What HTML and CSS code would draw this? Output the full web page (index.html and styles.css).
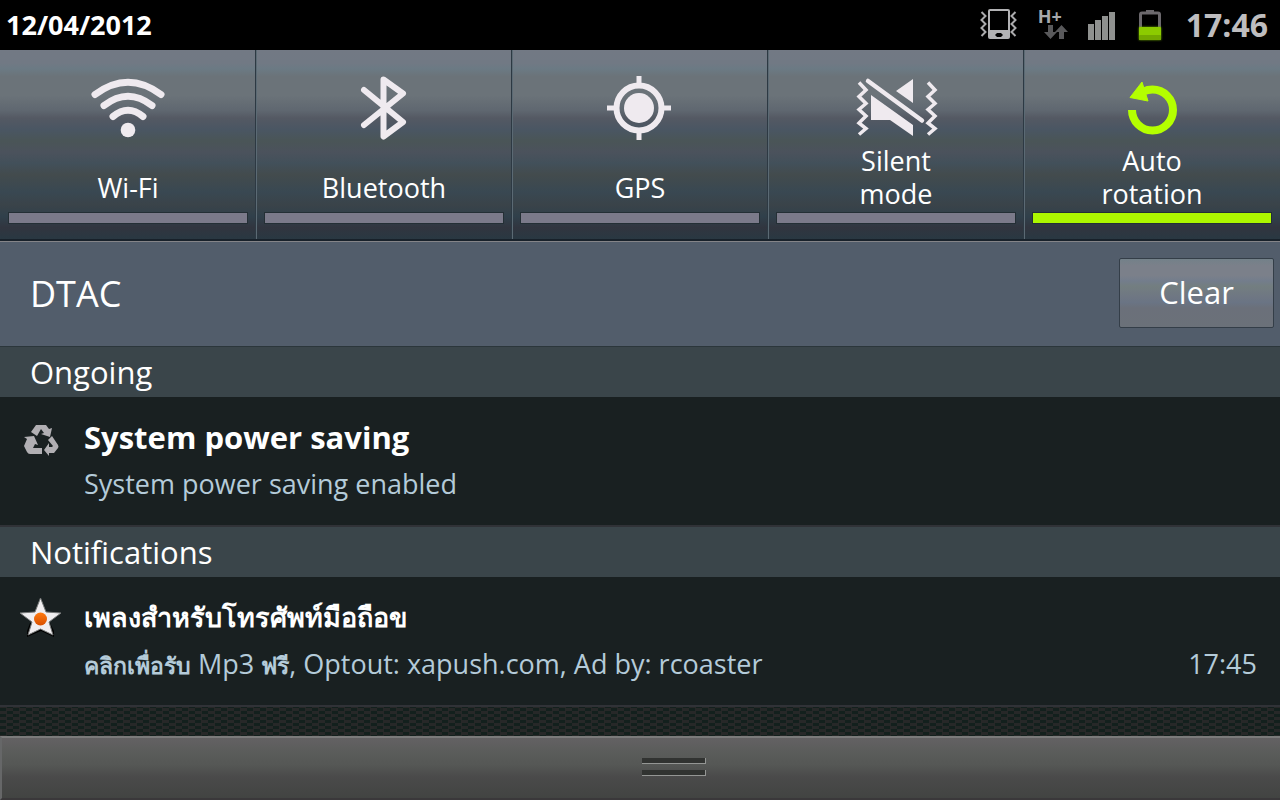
FILE: index.html
```html
<!DOCTYPE html>
<html lang="en">
<head>
    <meta charset="UTF-8">
    <meta name="viewport" content="width=device-width, initial-scale=1.0">
    <title>Notifications</title>
    <link rel="stylesheet" href="styles.css">
</head>
<body>
    <header class="status-bar">
        <span class="date">12/04/2012</span>
        <div class="status-icons">
            <svg class="icon-vibrate" width="38" height="32" viewBox="0 0 38 32">
                <path d="M2 4l4 4-4 4 4 4-4 4 4 4-4 4M36 4l-4 4 4 4-4 4 4 4-4 4 4 4" transform="translate(-.5 0)" fill="none" stroke="#aaaaac" stroke-width="2"/>
                <path fill-rule="evenodd" fill="#b2b2b4" d="M10 1h18a2 2 0 0 1 2 2v26a2 2 0 0 1-2 2H10a2 2 0 0 1-2-2V3a2 2 0 0 1 2-2zM10 3v19h18V3zM17 25l-2 2 2 2h4l2-2-2-2z"/>
            </svg>
            <div class="network">
                <span class="network-type">H+</span>
                <svg class="network-arrows" width="24" height="14" viewBox="0 0 24 14">
                    <path fill="#59595b" d="M4 0h5v7h4l-6.500 7L0 7h4z"/>
                    <path fill="#59595b" d="M15 14h5V7h4l-6.500-7L11 7h4z"/>
                </svg>
            </div>
            <svg class="icon-signal" width="28" height="28" viewBox="0 0 28 28">
                <path fill="#8f918f" d="M0 12h6v16H0zM7 8h6v20H7zM14 4h6v24h-6zM21 0h6v28h-6z"/>
            </svg>
            <svg class="icon-battery" width="24" height="32" viewBox="0 0 24 32">
                <path d="M2.500 19V5.500a1.500 1.500 0 0 1 1.500-1.500h16a1.500 1.500 0 0 1 1.500 1.500V19" fill="none" stroke="#6c696d" stroke-width="3"/>
                <path fill="#6c696d" d="M8 1h8v3H8z"/>
                <g class="charge">
                    <rect x="1" y="18" width="22" height="13" rx="1" fill="#8ccb00"/>
                    <rect x="1" y="26" width="22" height="5" rx="1" fill="#74a900"/>
                </g>
            </svg>
        </div>
        <span class="clock">17:46</span>
    </header>

    <nav class="toggles">
        <button class="toggle" type="button" aria-pressed="false">
            <svg width="80" height="64" viewBox="0 0 80 64">
                <g fill="none" stroke="#efeaef" stroke-width="7" stroke-linecap="round">
                    <path d="M7 18.500Q40-6 73 18.500"/>
                    <path d="M16 29.500Q40 11 64 29.500"/>
                    <path d="M25 40.500Q40 28 55 40.500"/>
                </g>
                <circle cx="40" cy="54" r="7.300" fill="#efeaef"/>
            </svg>
            <span class="toggle-label one-line">Wi-Fi</span>
            <span class="toggle-bar"></span>
        </button>
        <button class="toggle" type="button" aria-pressed="false">
            <svg width="80" height="64" viewBox="0 0 80 64">
                <path d="M20 14L59 46 39.500 60.500V3.500L59 17.500 20 49" fill="none" stroke="#efeaef" stroke-width="6" stroke-linecap="round" stroke-linejoin="round"/>
            </svg>
            <span class="toggle-label one-line">Bluetooth</span>
            <span class="toggle-bar"></span>
        </button>
        <button class="toggle" type="button" aria-pressed="false">
            <svg width="80" height="64" viewBox="0 0 80 64">
                <g transform="translate(-1 0)">
                    <path d="M40 0v9M40 55v9M8 32h9M63 32h9" stroke="#efeaef" stroke-width="5"/>
                    <circle cx="40" cy="32" r="22.500" fill="none" stroke="#efeaef" stroke-width="6"/>
                    <circle cx="40" cy="32" r="15" fill="#efeaef"/>
                </g>
            </svg>
            <span class="toggle-label one-line">GPS</span>
            <span class="toggle-bar"></span>
        </button>
        <button class="toggle" type="button" aria-pressed="false">
            <svg width="84" height="64" viewBox="0 0 84 64">
                <g transform="translate(3 0)">
                    <g fill="none" stroke="#efeaef" stroke-width="3.500">
                        <path d="M2 6.500l7 7.500-7 6.500 7 7-7 6 7 6.500-7 7 7 5.500-7 6"/>
                        <path d="M71 6.500l7 7.500-7 6.500 7 7-7 6 7 6.500-7 7 7 5.500-7 6"/>
                        <path d="M11 5l54 39.500" stroke-width="4.500" stroke-linecap="round"/>
                    </g>
                    <path fill="#efeaef" d="M56 3v24L39 15zM14 19l42 30v11L33 44H14z"/>
                </g>
            </svg>
            <span class="toggle-label">Silent mode</span>
            <span class="toggle-bar"></span>
        </button>
        <button class="toggle active" type="button" aria-pressed="true">
            <svg width="80" height="64" viewBox="0 0 80 64">
                <path d="M20 34a20.500 20.500 0 1 0 20.500-20.500q-5 0-9 2" fill="none" stroke="#b4ff00" stroke-width="8"/>
                <path fill="#b4ff00" stroke="#b4ff00" stroke-linejoin="round" d="M30 6l6 19-18-3.500z"/>
            </svg>
            <span class="toggle-label">Auto rotation</span>
            <span class="toggle-bar"></span>
        </button>
    </nav>

    <div class="carrier">
        <span class="carrier-name">DTAC</span>
        <button class="clear" type="button">Clear</button>
    </div>

    <main>
        <h2>Ongoing</h2>
        <article class="item">
            <svg class="item-icon" width="40" height="40" viewBox="0 0 40 40">
                <g fill="#b1afb3" transform="translate(1 2)">
                    <path d="M14 5h10l3 4 3-1-2 9-9-3 3-1-3-4-4 7-6-4z"/>
                    <path d="M2 17l10-1 4 9-3-1-2 4h9v6H8q-2 0-3-2l-3-6 3-7z"/>
                    <path d="M30 16l6 9q1 2 0 3l-4 5h-5v3l-5-6 5-7v4h3l1-1-5-6z"/>
                </g>
            </svg>
            <div class="item-text">
                <h3>System power saving</h3>
                <p>System power saving enabled</p>
            </div>
        </article>

        <h2>Notifications</h2>
        <article class="item">
            <svg class="item-icon" width="40" height="40" viewBox="0 0 40 40">
                <defs>
                    <linearGradient id="orange" x1="0" y1="0" x2="0" y2="1">
                        <stop offset="0" stop-color="#ff7a10"/>
                        <stop offset="1" stop-color="#d85000"/>
                    </linearGradient>
                </defs>
                <path fill="#000" d="M6 33l3-8h20l4 8v6l-13-6-14 6z"/>
                <path fill="#f0eef0" stroke="#777979" d="M19.500 0l5.500 14 15 1-12 9 4 13-12.500-6L7 37l4-13-12-9 15-1z"/>
                <circle cx="19.500" cy="21" r="6.500" fill="url(#orange)"/>
            </svg>
            <div class="item-text">
                <h3 class="thai" lang="th">เพลงสำหรับโทรศัพท์มือถือข</h3>
                <p><span class="thai" lang="th">คลิกเพื่อรับ</span> Mp3 <span class="thai" lang="th">ฟรี</span>, Optout: xapush.com, Ad by: rcoaster</p>
            </div>
            <time>17:45</time>
        </article>
    </main>

    <button class="handle" type="button" aria-label="Close panel">
        <span class="grip"></span>
        <span class="grip"></span>
    </button>
</body>
</html>
```
FILE: styles.css
```css
* {
    box-sizing: border-box;
}

body {
    display: flex;
    flex-direction: column;
    min-height: 100vh;
    margin: 0;
    color: #fff;
    font-family: "Open Sans", "Noto Sans", sans-serif;
    background: repeating-conic-gradient(#272828 0 25%, #13201d 0 50%) 0 0 / 13px 6px;
}

button {
    padding: 0;
    border: none;
    color: #fff;
    font-family: inherit;
    cursor: pointer;
}

h2, h3, p {
    margin: 0;
}

/* status bar */
.status-bar {
    display: flex;
    align-items: center;
    height: 50px;
    padding: 0 12px 2px 6px;
    background: #000;
    font-weight: bold;
}

.date {
    font-size: 27px;
}

.status-icons {
    display: flex;
    align-items: center;
    gap: 20px;
    margin-left: auto;
}

.network {
    display: flex;
    flex-direction: column;
    width: 30px;
    height: 30px;
}

.network-type {
    color: #a8a8aa;
    font-size: 18px;
    line-height: 14px;
}

.network-arrows {
    align-self: flex-end;
    margin-top: 2px;
}

.icon-signal {
    margin-top: 3px;
}

.icon-battery {
    margin: 2px 0 0 2px;
    overflow: visible;
}

.charge {
    filter: drop-shadow(0 0 1px #6fa800);
}

.clock {
    margin-left: 24px;
    color: #bebdbf;
    font-size: 32px;
}

/* quick toggles */
.toggles {
    display: grid;
    grid-template-columns: repeat(5, 1fr);
    border-bottom: 2px solid #18212a;
}

.toggle {
    display: flex;
    flex-direction: column;
    align-items: center;
    padding: 26px 7px 15px;
    border-right: 1px solid #2d3943;
    border-left: 1px solid #5b6a74;
    background: linear-gradient(#727984 0, #717984 7%, #6b7a84 10%, #6b7379 14%, #6b7379 24%, #5f6770 32%, #545963 36%, #4a5663 42%, #4a5557 48%, #4b525c 54%, #42505a 60%, #434b4d 66%, #394852 75%, #3a4349 82%, #30404b 88%, #31353f 94%, #293842 100%);
}

.toggle:first-child {
    border-left-color: transparent;
}

.toggle:last-child {
    border-right-color: transparent;
}

.toggle-label {
    display: flex;
    align-items: flex-end;
    max-width: 130px;
    height: 72px;
    padding-bottom: 2px;
    font-size: 27px;
    line-height: 33px;
}

.one-line {
    padding-bottom: 8px;
}

.toggle-bar {
    align-self: stretch;
    height: 12px;
    border: 1px solid #242f35;
    background: #7b7a8a;
}

.active .toggle-bar {
    background: #adf700;
}

/* carrier */
.carrier {
    display: flex;
    align-items: center;
    justify-content: space-between;
    height: 106px;
    padding: 0 6px 2px 30px;
    border-top: 1px solid #848488;
    border-bottom: 1px solid #2b363b;
    background: #525d6b;
}

.carrier-name {
    font-size: 36px;
}

.clear {
    width: 155px;
    height: 70px;
    padding-bottom: 2px;
    border: 1px solid #343e48;
    border-radius: 2px;
    background: linear-gradient(#738189 0, #7b808a 10%, #7b808a 24%, #737d8c 32%, #737e80 40%, #6f7783 55%, #6a7484 64%, #6b707a 72%, #6b7179 100%);
    font-size: 31px;
}

/* notification list */
h2 {
    padding: 0 30px;
    background: #3a454a;
    font-size: 31px;
    font-weight: normal;
    line-height: 50px;
}

.item {
    display: flex;
    height: 130px;
    padding: 16px 23px 0 21px;
    border-bottom: 2px solid #303237;
    background: #192021;
}

.item-icon {
    margin: 5px 23px 0 0;
    overflow: visible;
}

.item-text {
    flex: 1;
}

.item h3 {
    font-size: 31px;
    line-height: 48px;
}

.item p,
.item time {
    color: #b4cbd9;
    font-size: 27px;
    line-height: 46px;
}

.item time {
    margin-top: 48px;
}

.item h3.thai {
    font-size: 27px;
}

.item p .thai {
    font-size: 23px;
    font-weight: bold;
}

/* pull handle */
.handle {
    display: flex;
    flex-direction: column;
    align-items: center;
    gap: 6px;
    height: 64px;
    margin-top: auto;
    padding: 20px 0 0 66px;
    border-top: 2px solid #7b7b7b;
    border-left: 2px solid #666768;
    border-bottom: 2px solid #3a383a;
    background: linear-gradient(#636163, #5a5c5a 25%, #555755 45%, #4a4a4a 65%, #424442);
}

.grip {
    width: 64px;
    height: 6px;
    border-right: 1px solid #949694;
    border-bottom: 1px solid #949694;
    background: #313331;
}
```
